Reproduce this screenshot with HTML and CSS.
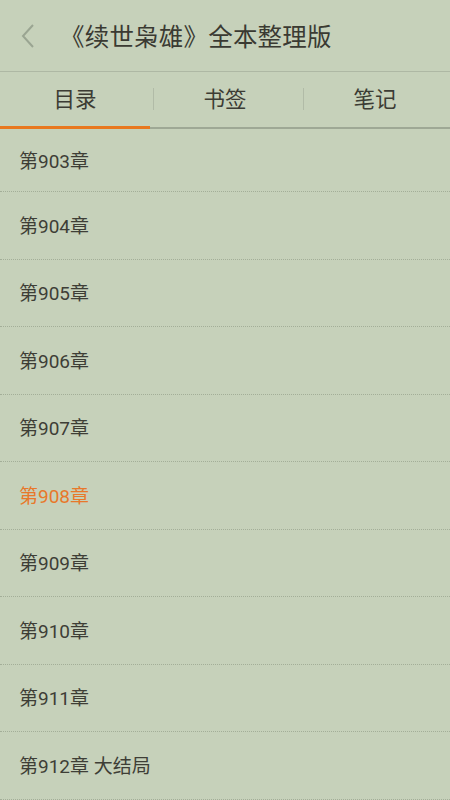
FILE: index.html
```html
<!DOCTYPE html>
<html lang="zh">
<head>
<meta charset="utf-8">
<link rel="stylesheet" href="styles.css">
</head>
<body>
<div class="app">
  <header class="topbar">
    <svg class="back" width="16" height="26" viewBox="0 0 16 26"><path d="M13 2 L3 13 L13 24" fill="none" stroke="#9aa592" stroke-width="2"/></svg>
    <h1 class="title">《续世枭雄》全本整理版</h1>
  </header>
  <nav class="tabs">
    <div class="tab active">目录</div>
    <div class="tab">书签</div>
    <div class="tab">笔记</div>
  </nav>
  <ul class="list">
    <li class="row first">第903章</li>
    <li class="row">第904章</li>
    <li class="row">第905章</li>
    <li class="row">第906章</li>
    <li class="row">第907章</li>
    <li class="row current">第908章</li>
    <li class="row">第909章</li>
    <li class="row">第910章</li>
    <li class="row">第911章</li>
    <li class="row">第912章 大结局</li>
  </ul>
</div>
</body>
</html>
```
FILE: styles.css
```css
* { box-sizing: border-box; }
html, body { margin: 0; padding: 0; }
body {
  background: #c6d1ba;
  font-family: "Noto Sans CJK SC", "Roboto", sans-serif;
  color: #3c3c34;
}
.app { width: 450px; height: 800px; overflow: hidden; }
.topbar {
  height: 72px;
  display: flex;
  align-items: center;
  padding-left: 20px;
  border-bottom: 1px solid #aeb8a4;
}
.back { flex: none; }
.title {
  margin: 0 0 0 24px;
  font-size: 24.5px;
  font-weight: 400;
  color: #3a3a32;
  letter-spacing: 0.2px;
}
.tabs {
  height: 57px;
  display: flex;
  border-bottom: 2px solid #9ea895;
}
.tab {
  flex: 1;
  display: flex;
  align-items: center;
  justify-content: center;
  font-size: 21.5px;
  color: #3c3c34;
  position: relative;
  padding-bottom: 4px;
}
.tab + .tab::before {
  content: "";
  position: absolute;
  left: 3px;
  top: 16px;
  height: 22px;
  border-left: 1px solid #b1bba7;
}
.tab.active::after {
  content: "";
  position: absolute;
  left: 0;
  right: 0;
  bottom: -2px;
  height: 3px;
  background: #e8781f;
}
.list { list-style: none; margin: 0; padding: 0; }
.row {
  height: 67.5px;
  display: flex;
  align-items: center;
  padding-left: 19px;
  font-family: "Roboto", "Noto Sans CJK SC", sans-serif;
  font-size: 19px;
  color: #3e3e36;
  border-bottom: 1px dotted #a3ae98;
  padding-bottom: 2px;
}
.row.first { height: 63px; }
.row.current { color: #e8782a; }
```
